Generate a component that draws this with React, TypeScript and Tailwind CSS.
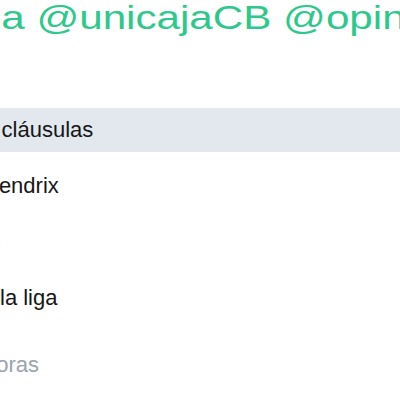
export default function App() {
  const rows = [
    { text: "de cláusulas", cut: "ml-[-29px]", active: true, faint: false },
    { text: "Hendrix", cut: "ml-[-17px]", active: false, faint: false },
    { text: "s", cut: "ml-[-10px]", active: false, faint: true },
    { text: "la liga", cut: "ml-0", active: false, faint: false },
  ];

  return (
    <div className="w-[400px] h-[400px] overflow-hidden bg-white font-['Liberation_Sans',Arial,sans-serif]">
      {/* Heading with mentions */}
      <div className="h-[40px] overflow-hidden">
        <div className="origin-left scale-x-[1.24] whitespace-nowrap pl-[1px] text-[34px] leading-none text-[#2dc88b]">
          a @unicajaCB @opinion
        </div>
      </div>

      {/* Suggestions list */}
      <div className="mt-[68px] flex flex-col gap-[12px]">
        {rows.map((r, i) => (
          <div
            key={i}
            className={`h-[44px] overflow-hidden whitespace-nowrap ${r.active ? "bg-[#e2e8ee]" : ""}`}
          >
            <div
              className={`${r.cut} text-[22px] leading-[44px] ${
                r.faint ? "text-[#eef0f2]" : "text-[#161616]"
              }`}
            >
              {r.text}
            </div>
          </div>
        ))}
        <div className="mt-[11px] h-[44px] overflow-hidden whitespace-nowrap">
          <div className="ml-[-16px] text-[22px] leading-[44px] text-[#9aa4ae]">
            horas
          </div>
        </div>
      </div>
    </div>
  );
}
